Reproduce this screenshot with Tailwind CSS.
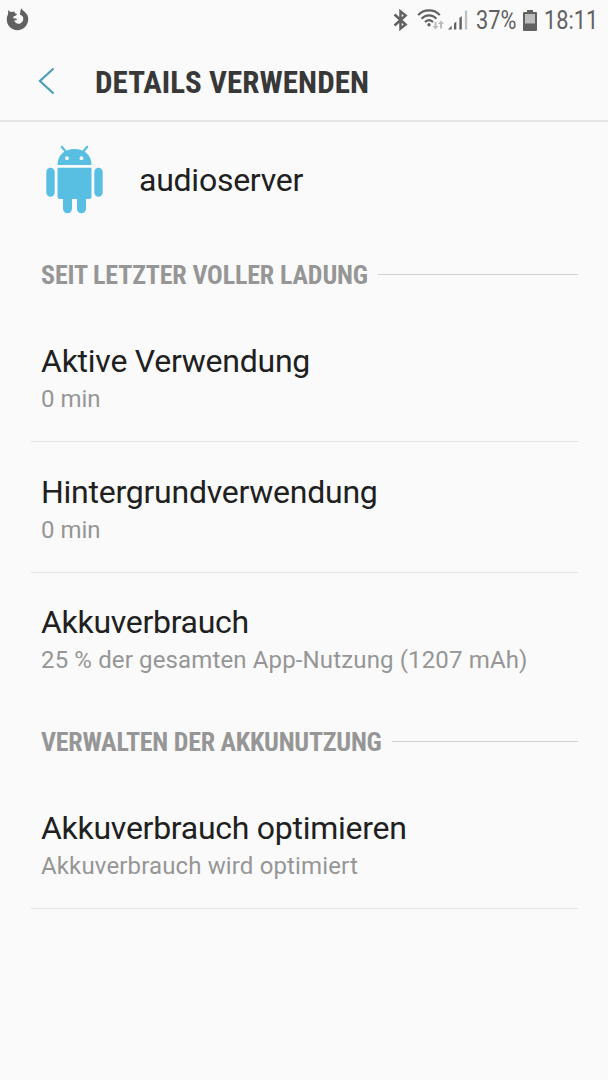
<!DOCTYPE html>
<html lang="de">
<head>
    <meta charset="UTF-8">
    <meta name="viewport" content="width=device-width, initial-scale=1.0">
    <title>Details verwenden</title>
    <script src="https://cdn.jsdelivr.net/npm/@tailwindcss/browser@4"></script>
</head>
<body class="bg-[#fafafa] h-[1080px] overflow-hidden font-['Roboto',sans-serif] text-[#202020]">
    <!-- Status bar -->
    <div class="h-10 flex items-center justify-between pl-[6px] pr-[10px] text-[#616161]">
        <svg class="w-[23px] h-[23px] -mt-px" viewBox="0 0 23 23" fill="currentColor">
            <path d="M2.3 2 4.6 4 8.3 3.4 9 5.2 11.2 6 9.5 7.8 7.4 8.4 7.2 10.2 10 10.6 11.2 12 8.2 12.6C9 15.4 12 16.4 14.6 15.2 17.4 13.8 18 10.4 16.4 8L13.8 6.4C14.6 5 14 2.5 15.3.3 16.4 2.8 18.6 3.1 20.2 5.4 22 7.3 22.7 10 22 13.2 20.8 18.6 16.5 22.3 11.3 22.2 5.3 22 .8 17.5.8 11.8.8 9.2 1.3 7.6 2 6.5Z"/>
        </svg>
        <div class="flex items-center">
            <!-- Bluetooth -->
            <svg class="w-[15px] h-[22px] mr-[9px]" viewBox="0 0 15 22" fill="none" stroke="currentColor" stroke-width="2.5">
                <path d="M1.5 5.5 12.6 15.5 7.5 19.6V2.4L12.6 6.5 1.5 16.5"/>
            </svg>
            <!-- WLAN -->
            <svg class="w-[27px] h-[22px] mr-[4px]" viewBox="0 0 27 22" fill="none" stroke="currentColor" stroke-width="2.1">
                <path d="M1.2 6.2C6.5-.2 17.5-.2 22.8 6.2M4.6 9.8C8.5 5.2 15.5 5.2 19.4 9.8M8 13.2C10 10.4 14 10.4 16 13.2"/>
                <circle cx="12" cy="15.8" r="1.7" fill="currentColor" stroke="none"/>
                <path class="text-[#bcbcbc]" d="M18.5 13V18.5M24 19.5V13" stroke-width="2"/>
                <path class="text-[#bcbcbc]" d="M15.4 17H21.6L18.5 20.5ZM20.9 15H27L24 11.5Z" fill="currentColor" stroke="none"/>
            </svg>
            <!-- Signal -->
            <svg class="w-[20px] h-[22px] mr-[8px]" viewBox="0 0 20 22" fill="currentColor">
                <path d="M0 20.5 3.7 16.8V20.5ZM6 14.5 8.3 12.5V20.5H6ZM11.4 9 13.8 7V20.5H11.4Z"/>
                <path class="text-[#c0c0c0]" d="M16.9 1.5H19.2V20.5H16.9Z"/>
            </svg>
            <span class="mt-[2px] text-[25px] leading-[40px] inline-block w-[40px] whitespace-nowrap"><span class="inline-block origin-left scale-x-[0.87]">37%</span></span>
            <svg class="w-[14px] h-[21px] ml-[7px] mr-[7px]" viewBox="0 0 14 21" fill="currentColor">
                <path d="M4 0H10V2H13Q14 2 14 3V20Q14 21 13 21H1Q0 21 0 20V3Q0 2 1 2H4Z"/>
                <path class="text-[#bdbdbd]" d="M2 4H12V13.5H2Z"/>
            </svg>
            <span class="mt-[2px] text-[25px] leading-[40px] inline-block w-[54px] whitespace-nowrap"><span class="inline-block origin-left scale-x-[0.87]">18:11</span></span>
        </div>
    </div>

    <header class="h-[82px] flex items-center pl-[38px] border-b-2 border-[#e6e6e6]">
        <svg class="mt-[2px] w-[17px] h-[28px]" viewBox="0 0 17 28" fill="none" stroke="#4f9fb5" stroke-width="2.3">
            <path d="M15.5 1.5 2 14 15.5 26.5"/>
        </svg>
        <h1 class="ml-[40px] mt-[5px] text-[31px] leading-[40px] font-bold font-['Roboto_Condensed','Roboto',sans-serif] tracking-[0.06px] text-[#383838] whitespace-nowrap">DETAILS VERWENDEN</h1>
    </header>

    <main>
        <div class="h-[115px] flex items-center pl-[46px]">
            <svg class="w-[57px] h-[70px]" viewBox="0 0 57 70" fill="#58bfe3">
                <path d="M11.5 20C11.5 10.5 18 4 28.5 4S45.5 10.5 45.5 20Z"/>
                <path d="M20 7 15.8 1.8M37 7 41.2 1.8" stroke="#58bfe3" stroke-width="2.2" stroke-linecap="round"/>
                <circle cx="21" cy="13.2" r="1.9" fill="#fafafa"/>
                <circle cx="35.5" cy="13.2" r="1.9" fill="#fafafa"/>
                <path d="M11.5 22.7H45.5V51.5Q45.5 54 43 54H14Q11.5 54 11.5 51.5Z"/>
                <rect x="0.3" y="22.7" width="8.4" height="29" rx="4.2"/>
                <rect x="48.3" y="22.7" width="8.4" height="29" rx="4.2"/>
                <rect x="17" y="45" width="9" height="23.2" rx="4.5"/>
                <rect x="31" y="45" width="9" height="23.2" rx="4.5"/>
            </svg>
            <span class="ml-[36px] text-[32px] leading-[40px] tracking-[-0.25px]">audioserver</span>
        </div>

        <div class="h-[74px] flex items-center pl-[41px] pr-[30px]">
            <h2 class="mt-[2px] text-[26px] leading-[32px] font-bold font-['Roboto_Condensed','Roboto',sans-serif] tracking-[-0.15px] text-[#969696] whitespace-nowrap">SEIT LETZTER VOLLER LADUNG</h2>
            <div class="ml-[10px] flex-1 h-px bg-[#d0d0d0]"></div>
        </div>
        <div class="h-[131px] ml-[31px] mr-[30px] pl-[10px] pt-[30px] border-b border-[#e4e4e4]">
            <p class="text-[32px] leading-[40px] tracking-[-0.25px]">Aktive Verwendung</p>
            <p class="text-[24px] leading-[36px] text-[#969696]">0 min</p>
        </div>
        <div class="h-[131px] ml-[31px] mr-[30px] pl-[10px] pt-[30px] border-b border-[#e4e4e4]">
            <p class="text-[32px] leading-[40px] tracking-[-0.25px]">Hintergrundverwendung</p>
            <p class="text-[24px] leading-[36px] text-[#969696]">0 min</p>
        </div>
        <div class="h-[131px] ml-[31px] mr-[30px] pl-[10px] pt-[30px]">
            <p class="text-[32px] leading-[39px] tracking-[-0.3px]">Akkuverbrauch</p>
            <p class="text-[24px] leading-[36px] tracking-[0.14px] text-[#969696]">25 % der gesamten App-Nutzung (1207 mAh)</p>
        </div>

        <div class="h-[74px] flex items-center pl-[41px] pr-[30px]">
            <h2 class="mt-[2px] text-[26px] leading-[32px] font-bold font-['Roboto_Condensed','Roboto',sans-serif] tracking-[-0.25px] text-[#969696] whitespace-nowrap">VERWALTEN DER AKKUNUTZUNG</h2>
            <div class="ml-[10px] flex-1 h-px bg-[#d0d0d0]"></div>
        </div>
        <div class="h-[131px] ml-[31px] mr-[30px] pl-[10px] pt-[30px] border-b border-[#e4e4e4]">
            <p class="text-[32px] leading-[40px] tracking-[-0.27px]">Akkuverbrauch optimieren</p>
            <p class="text-[24px] leading-[36px] tracking-[0.14px] text-[#969696]">Akkuverbrauch wird optimiert</p>
        </div>
    </main>
</body>
</html>
